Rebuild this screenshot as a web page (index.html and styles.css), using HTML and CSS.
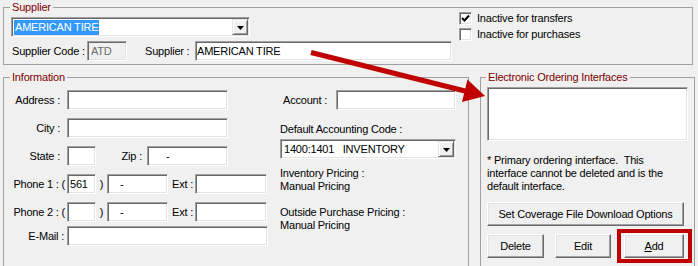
FILE: index.html
```html
<!DOCTYPE html>
<html lang="en">
<head>
  <meta charset="UTF-8" />
  <meta name="viewport" content="width=device-width, initial-scale=1.0" />
  <title>Supplier - Electronic Ordering</title>
  <link rel="stylesheet" href="styles.css">
</head>
<body>
  <div class="form">
    <fieldset class="group supplier">
      <legend>Supplier</legend>
      <div class="supplier-body">
        <div class="supplier-main">
          <div class="combo supplier-combo">
            <span class="combo-value"><span class="selected">AMERICAN TIRE</span></span>
            <span class="combo-btn"><svg width="7" height="4" viewBox="0 0 7 4"><path d="M0 0h7L3.5 4z" /></svg></span>
          </div>
          <div class="supplier-row">
            <span class="code-label">Supplier Code :</span>
            <input class="field code-field" type="text" value="ATD" readonly />
            <span class="name-label">Supplier :</span>
            <input class="field name-field" type="text" value="AMERICAN TIRE" />
          </div>
        </div>
        <div class="flags">
          <label class="check-row">
            <span class="check"><svg width="9" height="9" viewBox="0 0 9 9"><path d="M1 4l2.5 2.5L8 1.5" /></svg></span>
            Inactive for transfers
          </label>
          <label class="check-row">
            <span class="check"></span>
            Inactive for purchases
          </label>
        </div>
      </div>
    </fieldset>

    <div class="lower">
      <fieldset class="group info">
        <legend>Information</legend>
        <div class="info-body">
          <div class="info-left">
            <div class="row">
              <span class="row-label">Address :</span>
              <input class="field w-161" type="text" />
            </div>
            <div class="row">
              <span class="row-label">City :</span>
              <input class="field w-161" type="text" />
            </div>
            <div class="row">
              <span class="row-label">State :</span>
              <input class="field w-29" type="text" />
              <span class="zip-label">Zip :</span>
              <input class="field zip-field" type="text" value="-" />
            </div>
            <div class="row">
              <span class="row-label phone-label">Phone 1 : (</span>
              <input class="field w-29" type="text" value="561" />
              <span class="paren">)</span>
              <input class="field phone-field" type="text" value="-" />
              <span class="ext-label">Ext :</span>
              <input class="field w-72" type="text" />
            </div>
            <div class="row row-tight">
              <span class="row-label phone-label">Phone 2 : (</span>
              <input class="field w-29" type="text" />
              <span class="paren">)</span>
              <input class="field phone-field" type="text" value="-" />
              <span class="ext-label">Ext :</span>
              <input class="field w-72" type="text" />
            </div>
            <div class="row">
              <span class="row-label mail-label">E-Mail :</span>
              <input class="field w-200" type="text" />
            </div>
          </div>

          <div class="info-right">
            <div class="account-row">
              <span class="account-label">Account :</span>
              <input class="field account-field" type="text" />
            </div>
            <div class="ac-title">Default Accounting Code :</div>
            <div class="combo ac-combo">
              <span class="combo-value">1400:1401   INVENTORY</span>
              <span class="combo-btn"><svg width="7" height="4" viewBox="0 0 7 4"><path d="M0 0h7L3.5 4z" /></svg></span>
            </div>
            <div class="pricing">
              Inventory Pricing :<br>
              Manual Pricing<br>
              <br>
              Outside Purchase Pricing :<br>
              Manual Pricing
            </div>
          </div>
        </div>
      </fieldset>

      <fieldset class="group eoi">
        <legend>Electronic Ordering Interfaces</legend>
        <div class="eoi-body">
          <div class="listbox"></div>
          <p class="note">* Primary ordering interface.&nbsp; This<br>interface cannot be deleted and is the<br>default interface.</p>
          <button class="btn coverage-btn">Set Coverage File Download Options</button>
          <div class="btn-row">
            <button class="btn delete-btn">Delete</button>
            <button class="btn edit-btn">Edit</button>
            <button class="btn add-btn"><u>A</u>dd</button>
          </div>
        </div>
      </fieldset>
    </div>

    <!-- annotations drawn over the dialog -->
    <div class="highlight-box"></div>
    <svg class="arrow" width="698" height="266" viewBox="0 0 698 266">
      <line x1="311" y1="52.5" x2="467" y2="91.5" />
      <polygon points="485,96 467.5,79.5 462,102" />
    </svg>
  </div>
</body>
</html>
```

FILE: styles.css
```css
* {
  box-sizing: border-box;
  margin: 0;
  padding: 0;
}

body {
  background: #f0f0f0;
  color: #000;
  font-family: 'Liberation Sans', Arial, sans-serif;
  font-size: 11px;
  line-height: 13px;
  letter-spacing: -0.2px;
  white-space: nowrap;
}

.form {
  position: relative;
  width: 698px;
  height: 266px;
  overflow: hidden;
  padding: 1px 0 0 3px;
}

/* group boxes */
.group {
  border: 1px solid #a0a0a0;
  min-width: 0;
}

.group legend {
  color: #800000;
  padding: 0 2px;
  line-height: 13px;
}

/* sunken edit fields */
.field {
  font: inherit;
  letter-spacing: inherit;
  color: #000;
  height: 20px;
  background: #fff;
  border: 1px solid;
  border-color: #a0a0a0 #fff #fff #a0a0a0;
  box-shadow: inset 1px 1px 0 #696969, inset -1px -1px 0 #e3e3e3;
  padding: 0 2px;
  outline: none;
}

.combo {
  display: flex;
  height: 20px;
  background: #fff;
  border: 1px solid;
  border-color: #a0a0a0 #fff #fff #a0a0a0;
  box-shadow: inset 1px 1px 0 #696969, inset -1px -1px 0 #e3e3e3;
  padding: 1px;
}

.combo-value {
  flex: 1;
  display: flex;
  align-items: center;
  white-space: pre;
  padding-left: 1px;
}

.combo-btn {
  width: 16px;
  display: flex;
  align-items: center;
  justify-content: center;
  background: #f0f0f0;
  border: 1px solid;
  border-color: #e3e3e3 #696969 #696969 #e3e3e3;
  box-shadow: inset 1px 1px 0 #fff, inset -1px -1px 0 #a0a0a0;
}

.combo-btn svg {
  fill: #000;
  margin-top: 1px;
}

/* supplier */
.supplier {
  width: 690px;
  height: 64px;
  padding: 0 0 0 7px;
}

.supplier legend {
  margin-left: -1px;
}

.supplier-body {
  display: flex;
}

.supplier-main {
  width: 441px;
  padding-top: 3px;
}

.supplier-combo {
  width: 239px;
}

.selected {
  background: #3399ff;
  color: #fff;
  line-height: 15px;
  padding: 0 1px;
}

.supplier-row {
  display: flex;
  align-items: center;
  margin-top: 4px;
}

.code-label {
  width: 75px;
  margin-left: 1px;
}

.code-field {
  width: 40px;
  background: #f0f0f0;
  color: #6d6d6d;
  padding-left: 3px;
}

.name-label {
  width: 50px;
  margin-left: 18px;
}

.name-field {
  width: 257px;
  padding-left: 1px;
}

.flags {
  margin: -4px 0 0 7px;
}

.check-row {
  display: flex;
  align-items: center;
  height: 16px;
}

.check {
  width: 13px;
  height: 13px;
  margin-right: 5px;
  display: flex;
  align-items: center;
  justify-content: center;
  background: #fff;
  border: 1px solid;
  border-color: #a0a0a0 #fff #fff #a0a0a0;
  box-shadow: inset 1px 1px 0 #696969, inset -1px -1px 0 #e3e3e3;
}

.check svg {
  fill: none;
  stroke: #000;
  stroke-width: 2;
}

/* lower panels */
.lower {
  display: flex;
  margin-top: 6px;
}

.info {
  width: 466px;
  height: 220px;
}

.info legend {
  margin-left: 6px;
}

.info-body {
  display: flex;
}

.info-left {
  width: 264px;
  padding-top: 6px;
}

.row {
  display: flex;
  align-items: center;
  height: 20px;
  margin-bottom: 8px;
}

.row-tight {
  margin-bottom: 4px;
}

.row-label {
  width: 63px;
  text-align: right;
  padding-right: 7px;
}

.row-label.phone-label {
  padding-right: 2px;
}

.row-label.mail-label {
  padding-right: 3px;
}

.w-161 { width: 161px; }
.w-29 { width: 29px; }
.w-72 { width: 72px; }
.w-200 { width: 201px; }

.zip-label {
  width: 51px;
  text-align: right;
  padding-right: 5px;
}

.zip-field {
  width: 81px;
  padding-left: 18px;
}

.paren {
  width: 11px;
  text-align: center;
}

.phone-field {
  width: 61px;
  padding-left: 12px;
}

.ext-label {
  width: 27px;
  padding-left: 4px;
}

.info-right {
  width: 176px;
  margin-left: 12px;
  padding-top: 6px;
}

.account-row {
  display: flex;
  align-items: center;
}

.account-label {
  width: 56px;
  padding-left: 3px;
}

.account-field {
  width: 120px;
}

.ac-title {
  margin-top: 13px;
}

.ac-combo {
  margin-top: 3px;
  width: 176px;
}

.ac-combo .combo-value {
  padding-left: 2px;
}

.pricing {
  margin-top: 8px;
}

/* electronic ordering */
.eoi {
  width: 215px;
  height: 220px;
  margin-left: 11px;
  padding: 0 0 0 6px;
}

.eoi legend {
  margin-left: -1px;
}

.eoi-body {
  padding-top: 3px;
}

.listbox {
  width: 201px;
  height: 54px;
  background: #fff;
  border: 1px solid;
  border-color: #a0a0a0 #fff #fff #a0a0a0;
  box-shadow: inset 1px 1px 0 #696969, inset -1px -1px 0 #e3e3e3;
}

.note {
  margin-top: 13px;
}

.btn {
  font: inherit;
  letter-spacing: inherit;
  color: #000;
  height: 24px;
  background: #f0f0f0;
  border: 1px solid;
  border-color: #fff #696969 #696969 #fff;
  box-shadow: inset -1px -1px 0 #a0a0a0, inset 1px 1px 0 #e3e3e3;
  cursor: pointer;
}

.coverage-btn {
  display: block;
  width: 197px;
  margin-top: 9px;
}

.btn-row {
  display: flex;
  margin-top: 8px;
}

.delete-btn { width: 57px; }
.edit-btn { width: 56px; margin-left: 11px; }
.add-btn { width: 60px; margin-left: 13px; }

/* annotations */
.highlight-box {
  position: absolute;
  left: 617px;
  top: 229px;
  width: 75px;
  height: 34px;
  border: 4px solid #c00000;
}

.arrow {
  position: absolute;
  left: 0;
  top: 0;
  pointer-events: none;
}

.arrow line {
  stroke: #c00000;
  stroke-width: 5;
}

.arrow polygon {
  fill: #c00000;
}
```
